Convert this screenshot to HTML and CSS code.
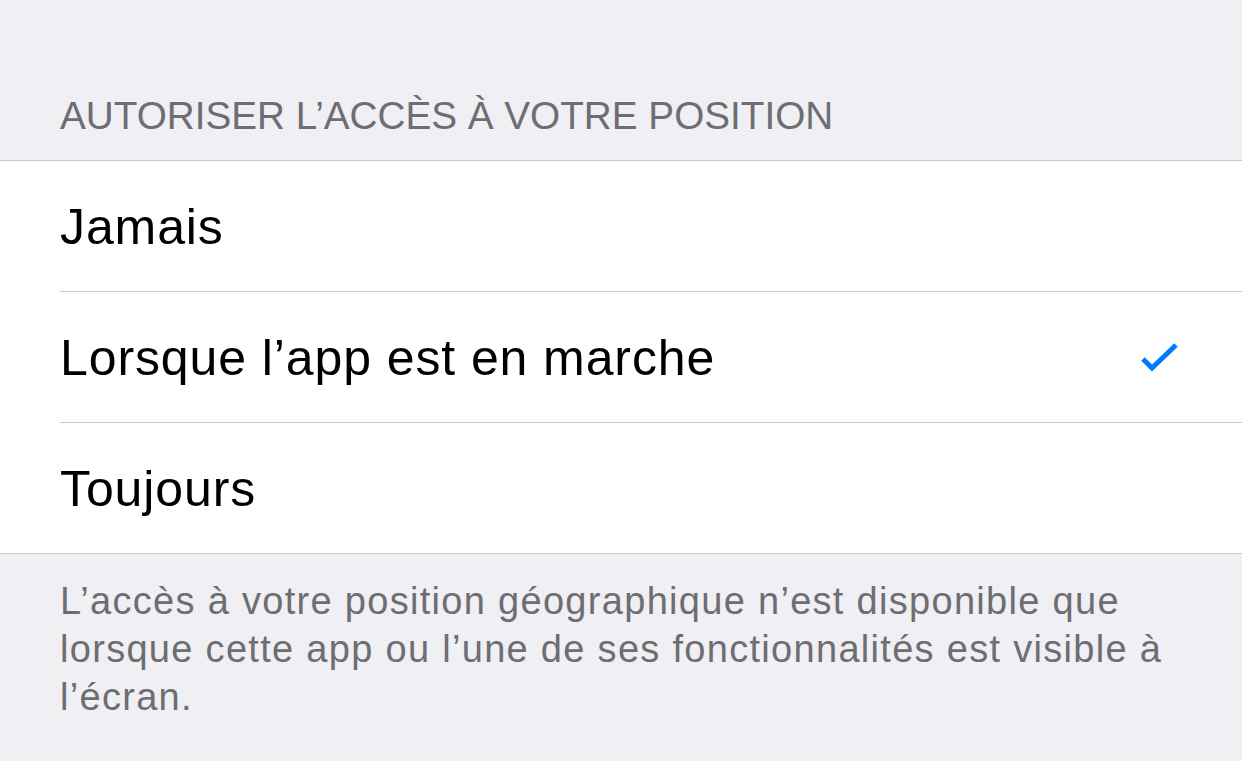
FILE: index.html
```html
<!DOCTYPE html>
<html lang="fr">
<head>
  <meta charset="UTF-8">
  <title>Position</title>
  <link rel="stylesheet" href="styles.css">
</head>
<body>
  <!-- Section header -->
  <div class="section-header">AUTORISER L’ACCÈS À VOTRE POSITION</div>

  <!-- Choices list -->
  <ul class="choices">
    <li class="choice">Jamais</li>
    <li class="choice">
      <span>Lorsque l’app est en marche</span>
      <svg class="check" width="40" height="32" viewBox="0 0 40 32">
        <path d="M3 17 L12 26 L36 3" fill="none" stroke="#007aff" stroke-width="5"/>
      </svg>
    </li>
    <li class="choice">Toujours</li>
  </ul>

  <!-- Footer note -->
  <p class="section-footer">L’accès à votre position géographique n’est disponible que lorsque cette app ou l’une de ses fonctionnalités est visible à l’écran.</p>
</body>
</html>
```

FILE: styles.css
```css
/* Page background, iOS grouped table look */
html, body {
  margin: 0;
  padding: 0;
  height: 100%;
  overflow: hidden;
}
body {
  background: #efeff4;
  font-family: "Liberation Sans", Arial, sans-serif;
}
/* Header above the group */
.section-header {
  padding: 94px 60px 22px;
  font-size: 38.7px;
  line-height: 44px;
  color: #6d6d72;
}
/* White group with hairlines */
.choices {
  list-style: none;
  margin: 0;
  padding: 0 0 0 60px;
  background: #fff;
  border-top: 1px solid #c8c7cc;
  border-bottom: 1px solid #c8c7cc;
}
.choice {
  display: flex;
  align-items: center;
  justify-content: space-between;
  height: 128px;
  padding-top: 2px;
  padding-right: 62px;
  font-size: 50px;
  letter-spacing: 0.9px;
  color: #000;
  border-bottom: 1px solid #c8c7cc;
}
.choice:last-child {
  border-bottom: none;
}
.check {
  display: block;
}
/* Footer note under the group */
.section-footer {
  margin: 0;
  padding: 23px 60px 0;
  font-size: 38px;
  letter-spacing: 1.3px;
  line-height: 48px;
  color: #6d6d72;
}
```
